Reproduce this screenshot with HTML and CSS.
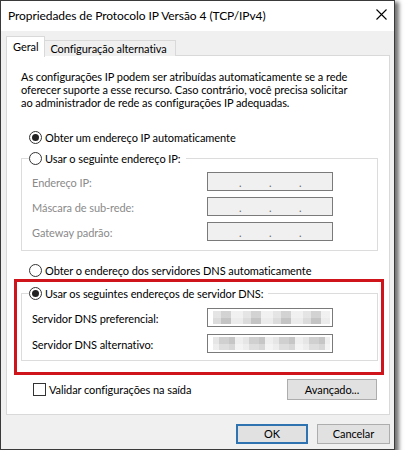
FILE: index.html
```html
<!DOCTYPE html>
<html lang="pt-BR">
<head>
<meta charset="utf-8">
<title>Propriedades de Protocolo IP Versão 4 (TCP/IPv4)</title>
<link rel="stylesheet" href="styles.css">
</head>
<body>
<div class="window">
  <div class="titlebar">
    <span class="title">Propriedades de Protocolo IP Versão 4 (TCP/IPv4)</span>
    <svg class="close" width="11" height="11" viewBox="0 0 11 11"><path d="M0.5 0.5 L10.5 10.5 M10.5 0.5 L0.5 10.5" stroke="#000" stroke-width="1.1" fill="none"/></svg>
  </div>
  <div class="content">
    <div class="tabs">
      <div class="tab selected">Geral</div>
      <div class="tab">Configuração alternativa</div>
    </div>
    <div class="panel">
      <p class="intro">As configurações IP podem ser atribuídas automaticamente se a rede oferecer suporte a esse recurso. Caso contrário, você precisa solicitar ao administrador de rede as configurações IP adequadas.</p>

      <div class="option first">
        <span class="radio checked"></span><span class="opt-label">Obter um endereço IP automaticamente</span>
      </div>

      <div class="group group-ip">
        <div class="group-head">
          <span class="radio"></span><span class="opt-label">Usar o seguinte endereço IP:</span>
        </div>
        <div class="field-row">
          <span class="field-label disabled">Endereço IP:</span>
          <span class="ipbox disabled-box"><span>.</span><span>.</span><span>.</span></span>
        </div>
        <div class="field-row">
          <span class="field-label disabled">Máscara de sub-rede:</span>
          <span class="ipbox disabled-box"><span>.</span><span>.</span><span>.</span></span>
        </div>
        <div class="field-row">
          <span class="field-label disabled">Gateway padrão:</span>
          <span class="ipbox disabled-box"><span>.</span><span>.</span><span>.</span></span>
        </div>
      </div>

      <div class="option dns-auto">
        <span class="radio"></span><span class="opt-label">Obter o endereço dos servidores DNS automaticamente</span>
      </div>

      <div class="group group-dns">
        <div class="group-head">
          <span class="radio checked"></span><span class="opt-label">Usar os seguintes endereços de servidor DNS:</span>
        </div>
        <div class="field-row">
          <span class="field-label">Servidor DNS preferencial:</span>
          <span class="ipbox active-box"><span class="mosaic m1"></span></span>
        </div>
        <div class="field-row">
          <span class="field-label">Servidor DNS alternativo:</span>
          <span class="ipbox active-box"><span class="mosaic m2"></span></span>
        </div>
      </div>

      <div class="bottom-row">
        <label class="check-wrap"><span class="checkbox"></span><span class="opt-label">Validar configurações na saída</span></label>
        <button class="btn adv">Avançado...</button>
      </div>

      <div class="highlight"></div>
    </div>
    <div class="footer">
      <button class="btn ok">OK</button>
      <button class="btn cancel">Cancelar</button>
    </div>
  </div>
</div>
</body>
</html>
```

FILE: styles.css
```css
* { box-sizing: border-box; }

html, body {
  margin: 0;
  padding: 0;
  background: #ffffff;
}

body {
  font-family: "Lato", "Noto Sans", sans-serif;
  font-size: 11px;
  letter-spacing: -0.07px;
  color: #000;
}

.window {
  width: 395px;
  height: 450px;
  border: 1px solid #3a3a3a;
  background: #f0f0f0;
  box-shadow: 3px 3px 4px 1px rgba(0, 0, 0, 0.55);
  display: flex;
  flex-direction: column;
}

.titlebar {
  height: 30px;
  flex: none;
  background: #ffffff;
  display: flex;
  align-items: center;
  justify-content: space-between;
  padding: 0 7px 2px 7px;
}

.title {
  font-size: 12px;
  letter-spacing: -0.08px;
  line-height: 15px;
  white-space: nowrap;
}

.close {
  display: block;
  margin-top: -2px;
}

.content {
  padding: 5px 5px 0 5px;
  display: flex;
  flex-direction: column;
}

.tabs {
  display: flex;
  align-items: flex-end;
  height: 20px;
  position: relative;
  z-index: 2;
  margin-bottom: -1px;
}

.tab {
  border: 1px solid #d9d9d9;
  border-bottom: none;
  line-height: 14px;
  white-space: nowrap;
}

.tab.selected {
  background: #ffffff;
  height: 21px;
  padding: 3px 6px 0 6px;
  margin-bottom: -1px;
}

.tab:not(.selected) {
  background: #f0f0f0;
  height: 16px;
  padding: 1px 8px 0 5px;
  border-left: none;
}

.panel {
  position: relative;
  width: 384px;
  height: 360px;
  background: #ffffff;
  border: 1px solid #d9d9d9;
  padding: 14px 0 0 0;
}

.intro {
  margin: 0 0 0 14px;
  width: 336px;
  line-height: 13px;
}

.option {
  display: flex;
  align-items: center;
  height: 15px;
  margin-left: 22px;
  line-height: 15px;
  white-space: nowrap;
}

.option.first { margin-top: 21px; }
.option.dns-auto { margin-top: 12px; }

.radio {
  display: inline-flex;
  align-items: center;
  justify-content: center;
  flex: none;
  width: 13px;
  height: 13px;
  border: 1px solid #333333;
  border-radius: 50%;
  background: #ffffff;
}

.radio.checked::after {
  content: "";
  width: 7px;
  height: 7px;
  border-radius: 50%;
  background: #222222;
}

.opt-label {
  margin-left: 3px;
}

.group {
  margin-left: 14px;
  width: 357px;
  border: 1px solid #dcdcdc;
}

.group-ip {
  margin-top: 13px;
  padding: 0 0 9px 0;
}

.group-dns {
  margin-top: 15px;
  padding: 0 0 7px 0;
}

.group-head {
  display: flex;
  align-items: center;
  width: max-content;
  height: 15px;
  line-height: 15px;
  margin: -8px 0 0 7px;
  padding-right: 5px;
  background: #ffffff;
  white-space: nowrap;
}

.field-row {
  display: flex;
  align-items: center;
  height: 19px;
  margin-top: 6px;
}

.group-ip .field-row:first-of-type { margin-top: 7px; }
.group-dns .field-row { margin-top: 7px; }
.group-dns .field-row:first-of-type { margin-top: 5px; }

.field-label {
  width: 185px;
  padding-left: 10px;
  padding-top: 1px;
  white-space: nowrap;
}

.field-label.disabled {
  color: #8a8a8a;
}

.ipbox {
  width: 126px;
  height: 19px;
  border: 1px solid #7a7a7a;
  display: flex;
  align-items: center;
  position: relative;
}

.disabled-box {
  background: #f0f0f0;
  padding-left: 31px;
  gap: 26px;
  color: #6a6a6a;
  font-size: 11px;
  line-height: 11px;
}

.disabled-box span {
  display: inline-block;
  width: 4px;
  padding-top: 2px;
}

.active-box {
  background: #ffffff;
  padding: 0 2px 0 5px;
}

.mosaic {
  display: block;
  width: 117px;
  height: 13px;
}

.m1 {
  background:
    linear-gradient(180deg, rgba(255,255,255,0.25) 0 50%, rgba(0,0,0,0) 50% 100%),
    repeating-linear-gradient(90deg, #dcdcdc 0 8px, #c4c4c4 8px 18px, #ececec 18px 30px);
}

.m2 {
  background:
    linear-gradient(180deg, rgba(255,255,255,0) 0 50%, rgba(255,255,255,0.3) 50% 100%),
    repeating-linear-gradient(90deg, #e6e6e6 0 6px, #d0d0d0 6px 16px, #c6c6c6 16px 22px, #efefef 22px 30px);
}

.bottom-row {
  display: flex;
  align-items: center;
  justify-content: space-between;
  margin-top: 18px;
  margin-left: 26px;
  margin-right: 12px;
  height: 21px;
}

.check-wrap {
  display: flex;
  align-items: center;
  white-space: nowrap;
}

.checkbox {
  display: inline-block;
  width: 13px;
  height: 13px;
  border: 1px solid #333333;
  background: #ffffff;
}

.btn {
  font-family: "Lato", "Noto Sans", sans-serif;
  font-size: 11px;
  letter-spacing: -0.07px;
  color: #000;
  background: #e1e1e1;
  border: 1px solid #adadad;
  padding: 0;
  margin: 0;
  line-height: 14px;
}

.btn.adv {
  width: 90px;
  height: 21px;
}

.highlight {
  position: absolute;
  left: 7px;
  top: 223px;
  width: 370px;
  height: 96px;
  border: 3px solid #cf141c;
  pointer-events: none;
}

.footer {
  display: flex;
  justify-content: flex-end;
  gap: 9px;
  margin-top: 9px;
  width: 384px;
}

.btn.ok {
  width: 72px;
  height: 20px;
  border: 2px solid #2f74b0;
}

.btn.cancel {
  width: 73px;
  height: 20px;
}
```
